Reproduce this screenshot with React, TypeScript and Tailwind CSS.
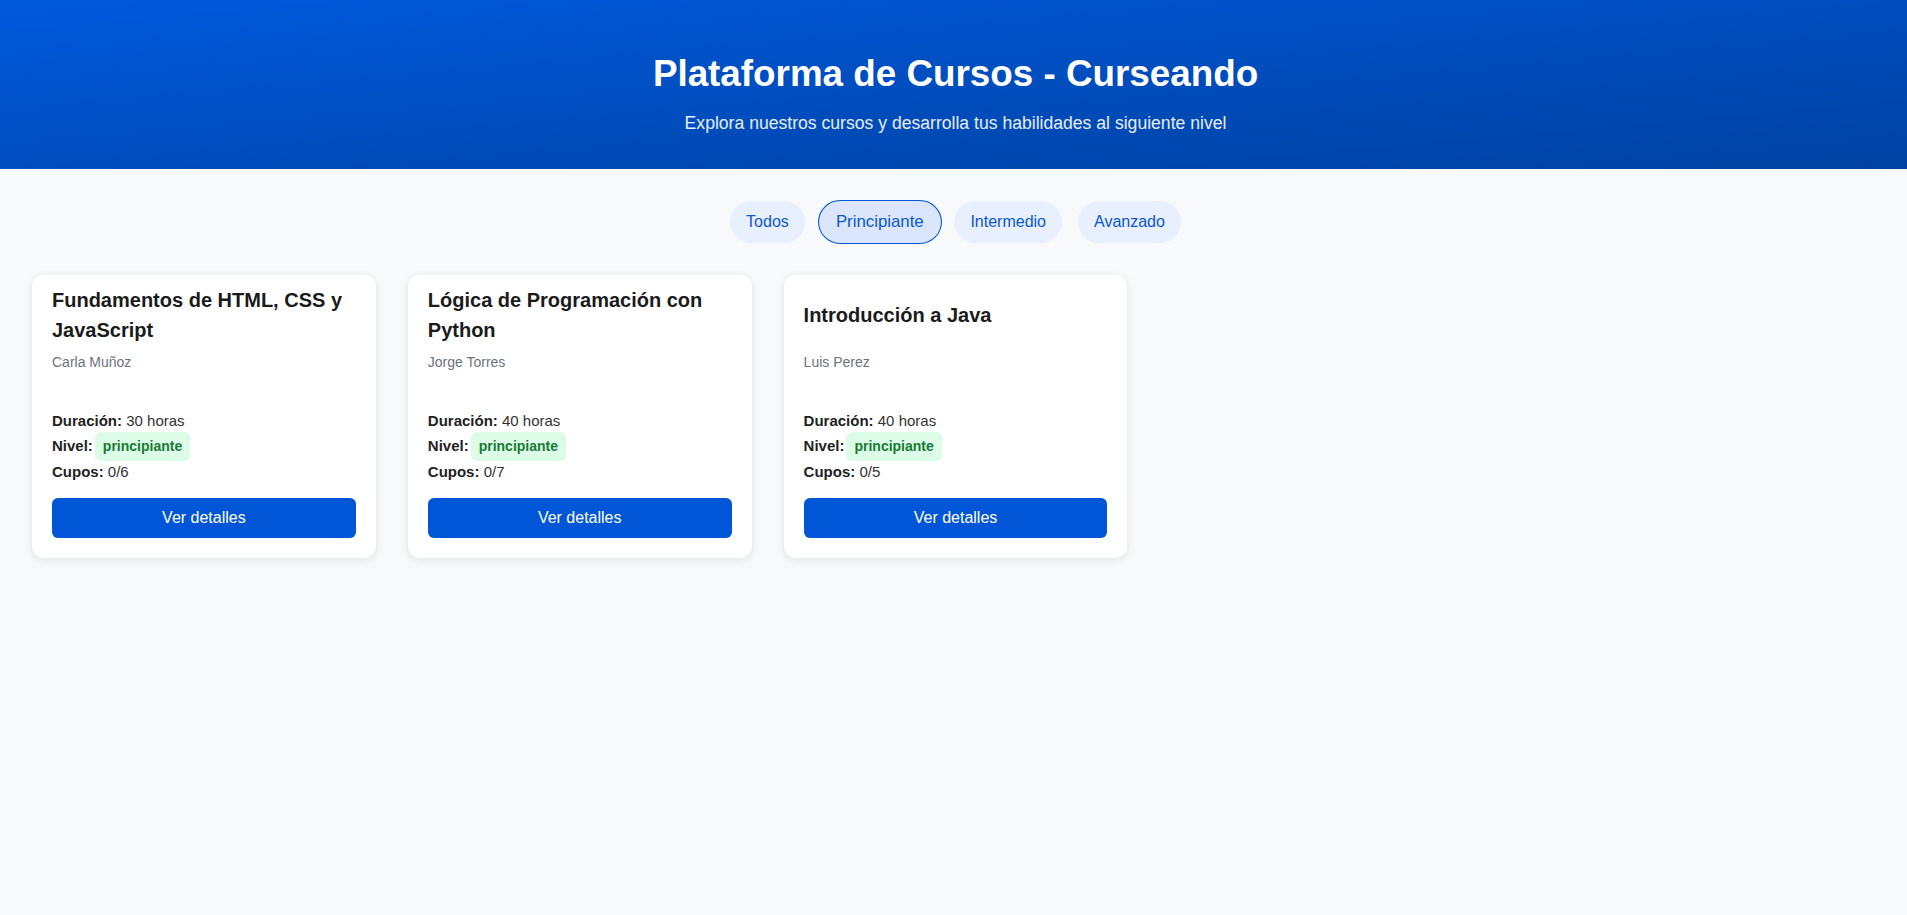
import { useState } from "react";

type Course = {
  id: number;
  title: string;
  teacher: string;
  hours: number;
  level: string;
  seats: string;
};

const courses: Course[] = [
  { id: 1, title: "Fundamentos de HTML, CSS y JavaScript", teacher: "Carla Muñoz", hours: 30, level: "principiante", seats: "0/6" },
  { id: 2, title: "Lógica de Programación con Python", teacher: "Jorge Torres", hours: 40, level: "principiante", seats: "0/7" },
  { id: 3, title: "Introducción a Java", teacher: "Luis Perez", hours: 40, level: "principiante", seats: "0/5" },
];

const filters = ["Todos", "Principiante", "Intermedio", "Avanzado"];

function CourseCard({ course }: { course: Course }) {
  return (
    <div className="flex flex-col rounded-xl bg-white px-5 pt-[10px] pb-5 shadow-[0_2px_8px_rgba(0,0,0,0.09)]">
      <div className="flex h-[60px] items-center">
        <h3 className="text-[20px] leading-[30px] font-bold text-[#1b1b1b]">{course.title}</h3>
      </div>
      <p className="mt-[7px] text-[14px] leading-[21px] text-[#6b7280]">{course.teacher}</p>

      <div className="mt-[37px] flex flex-col text-[15px] text-[#333]">
        <p className="leading-[22px]">
          <span className="font-bold text-[#222]">Duración:</span> {course.hours} horas
        </p>
        <p className="flex h-[29px] items-center">
          <span className="font-bold text-[#222]">Nivel:</span>
          <span className="ml-[2px] rounded-md bg-[#dcfce7] px-2 py-[6px] text-[14px] leading-[17px] font-bold text-[#177a35]">
            {course.level}
          </span>
        </p>
        <p className="leading-[22px]">
          <span className="font-bold text-[#222]">Cupos:</span> {course.seats}
        </p>
      </div>

      <button className="mt-[15px] h-10 w-full rounded-md bg-[#0056d6] text-[16px] text-white">
        Ver detalles
      </button>
    </div>
  );
}

export default function App() {
  const [active, setActive] = useState("Principiante");

  return (
    <div className="min-h-screen w-full overflow-hidden bg-[#f8f9fb] font-['Liberation_Sans',Arial,sans-serif]">
      <div className="w-[1911px]">
        <header className="bg-gradient-to-br from-[#0059dc] to-[#0042a2] pt-[52px] pb-[33px] text-center text-white">
          <h1 className="text-[2.3rem] leading-[44px] font-bold">Plataforma de Cursos - Curseando</h1>
          <p className="mt-[14px] text-[1.1rem] leading-[26px] text-white/90">
            Explora nuestros cursos y desarrolla tus habilidades al siguiente nivel
          </p>
        </header>

        <div className="mt-8 flex justify-center gap-4">
          {filters.map((f) => (
            <button
              key={f}
              onClick={() => setActive(f)}
              className={
                f === active
                  ? "scale-105 rounded-full border border-[#0056d6] bg-[#dbe6fc] px-4 py-[8px] text-[16px] leading-6 text-[#0a57cf]"
                  : "rounded-full bg-[#e8effe] px-4 py-[9px] text-[16px] leading-6 text-[#0a57cf]"
              }
            >
              {f}
            </button>
          ))}
        </div>

        <main className="grid grid-cols-[repeat(auto-fill,minmax(300px,1fr))] gap-8 p-8">
          {courses.map((c) => (
            <CourseCard key={c.id} course={c} />
          ))}
        </main>
      </div>
    </div>
  );
}
